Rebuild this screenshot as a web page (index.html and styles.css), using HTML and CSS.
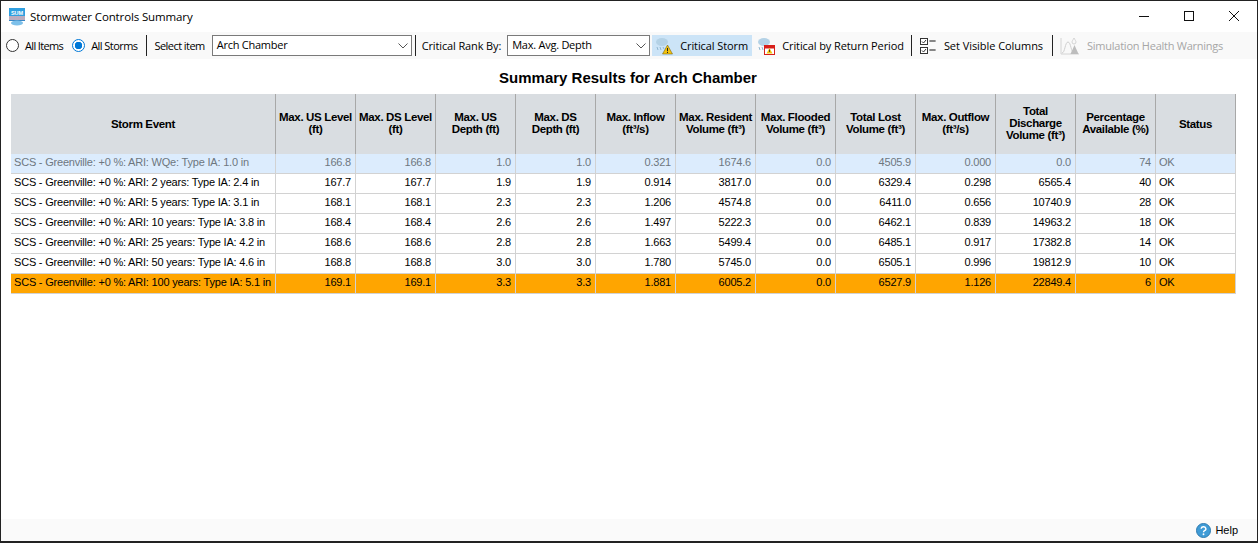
FILE: index.html
```html
<!DOCTYPE html>
<html lang="en">
<head>
<meta charset="utf-8">
<title>Stormwater Controls Summary</title>
<link rel="stylesheet" href="styles.css">
</head>
<body>
<div class="window">
  <header class="titlebar">
    <svg class="app-icon" width="16" height="18" viewBox="0 0 16 18">
      <rect x="0" y="0" width="16" height="8" fill="#2f9fe0"/>
      <text x="8" y="6.500" class="sum">SUM</text>
      <rect x="0" y="8" width="16" height="4" fill="#bcd9ee"/>
      <path d="M1 8v4M3 8v4M5 8v4M7 8v4M9 8v4M11 8v4M13 8v4M15 8v4" stroke="#b76a7a" stroke-width=".8"/>
      <path d="M0 12h16v1H0z" fill="#3a87c4"/>
      <ellipse cx="8" cy="15" rx="6" ry="2.500" fill="#7dc0ea"/>
    </svg>
    <span class="title">Stormwater Controls Summary</span>
    <div class="controls">
      <svg width="10" height="10" viewBox="0 0 10 10"><path d="M0 5.500h10" stroke="#111" stroke-width="1"/></svg>
      <svg width="10" height="10" viewBox="0 0 10 10"><rect x=".5" y=".5" width="9" height="9" fill="none" stroke="#111"/></svg>
      <svg width="10" height="10" viewBox="0 0 10 10"><path d="M0 0l10 10M10 0L0 10" stroke="#111" stroke-width="1"/></svg>
    </div>
  </header>

  <div class="toolbar">
    <label class="radio"><span class="dot"></span>All Items</label>
    <label class="radio second"><span class="dot on"></span>All Storms</label>
    <span class="sep s1"></span>
    <span class="lbl select-lbl">Select item</span>
    <div class="combo wide"><span>Arch Chamber</span><svg width="10" height="6" viewBox="0 0 10 6"><path d="M.5.5L5 5 9.500.5" fill="none" stroke="#555"/></svg></div>
    <span class="sep s2"></span>
    <span class="lbl rank-lbl">Critical Rank By:</span>
    <div class="combo narrow"><span>Max. Avg. Depth</span><svg width="10" height="6" viewBox="0 0 10 6"><path d="M.5.5L5 5 9.500.5" fill="none" stroke="#555"/></svg></div>
    <button class="tool active" type="button">
      <svg width="18" height="18" viewBox="0 0 18 18">
        <ellipse cx="7" cy="5" rx="6" ry="4" fill="#b4d2e6"/>
        <path d="M2 10l1 3M5 10l1 3M8 10l1 2" stroke="#8fb6d0"/>
        <path d="M12.500 8l5 9h-10z" fill="#f4c20d" stroke="#6b5500" stroke-width=".5"/>
        <path d="M12.500 11v3.200M12.500 15v1" stroke="#222"/>
      </svg>
      Critical Storm
    </button>
    <button class="tool t2" type="button">
      <svg width="18" height="18" viewBox="0 0 18 18">
        <ellipse cx="7" cy="5" rx="6" ry="4" fill="#b4d2e6"/>
        <path d="M2 10l1 3M5 10l1 3" stroke="#8fb6d0"/>
        <rect x="7.500" y="8.500" width="10" height="9" fill="#fff" stroke="#d8201a"/>
        <rect x="7.500" y="8.500" width="10" height="3" fill="#d8201a"/>
        <path d="M12.500 11l3 5.500h-6z" fill="#f4c20d"/>
        <path d="M12.500 12.500v2.500" stroke="#222" stroke-width=".8"/>
      </svg>
      Critical by Return Period
    </button>
    <span class="sep s3"></span>
    <button class="tool t3" type="button">
      <svg width="18" height="18" viewBox="0 0 18 18">
        <rect x=".5" y="1.500" width="7" height="6" fill="#fff" stroke="#333"/>
        <rect x=".5" y="10.500" width="7" height="6" fill="#fff" stroke="#333"/>
        <path d="M2 4.500l1.500 1.500L6 3M2 13.500l1.500 1.500L6 12" fill="none" stroke="#333"/>
        <path d="M9.500 3l2 2 2-2 2 2M9.500 5l2-2 2 2 2-2M9.500 12l2 2 2-2 2 2M9.500 14l2-2 2 2 2-2" fill="none" stroke="#444" stroke-width=".8"/>
      </svg>
      Set Visible Columns
    </button>
    <span class="sep s4"></span>
    <button class="tool t4" type="button" disabled>
      <svg width="20" height="18" viewBox="0 0 20 18">
        <path d="M1 1v16h18" fill="none" stroke="#d4d4d4"/>
        <path d="M2 16c3 0 3-11 6-11s3 11 6 11" fill="none" stroke="#d0d0d0"/>
        <path d="M14.500 8l4 9h-8z" fill="#bdbdbd"/>
        <path d="M14 1c1 2 2 3 2 4a2 2 0 0 1-4 0c0-1 1-2 2-4z" fill="none" stroke="#d4d4d4"/>
      </svg>
      Simulation Health Warnings
    </button>
  </div>

  <h1 class="heading">Summary Results for Arch Chamber</h1>

  <table class="grid">
    <colgroup>
      <col class="c-event">
      <col class="c"><col class="c"><col class="c"><col class="c"><col class="c"><col class="c">
      <col class="c"><col class="c"><col class="c"><col class="c"><col class="c"><col class="c">
    </colgroup>
    <thead>
      <tr>
        <th class="single">Storm Event</th>
        <th>Max. US Level<br>(ft)</th>
        <th>Max. DS Level<br>(ft)</th>
        <th>Max. US<br>Depth (ft)</th>
        <th>Max. DS<br>Depth (ft)</th>
        <th>Max. Inflow<br>(ft³/s)</th>
        <th>Max. Resident<br>Volume (ft³)</th>
        <th>Max. Flooded<br>Volume (ft³)</th>
        <th>Total Lost<br>Volume (ft³)</th>
        <th>Max. Outflow<br>(ft³/s)</th>
        <th>Total<br>Discharge<br>Volume (ft³)</th>
        <th>Percentage<br>Available (%)</th>
        <th class="single">Status</th>
      </tr>
    </thead>
    <tbody>
      <tr class="selected"><td>SCS - Greenville: +0 %: ARI: WQe: Type IA: 1.0 in</td><td>166.8</td><td>166.8</td><td>1.0</td><td>1.0</td><td>0.321</td><td>1674.6</td><td>0.0</td><td>4505.9</td><td>0.000</td><td>0.0</td><td>74</td><td>OK</td></tr>
      <tr><td>SCS - Greenville: +0 %: ARI: 2 years: Type IA: 2.4 in</td><td>167.7</td><td>167.7</td><td>1.9</td><td>1.9</td><td>0.914</td><td>3817.0</td><td>0.0</td><td>6329.4</td><td>0.298</td><td>6565.4</td><td>40</td><td>OK</td></tr>
      <tr><td>SCS - Greenville: +0 %: ARI: 5 years: Type IA: 3.1 in</td><td>168.1</td><td>168.1</td><td>2.3</td><td>2.3</td><td>1.206</td><td>4574.8</td><td>0.0</td><td>6411.0</td><td>0.656</td><td>10740.9</td><td>28</td><td>OK</td></tr>
      <tr><td>SCS - Greenville: +0 %: ARI: 10 years: Type IA: 3.8 in</td><td>168.4</td><td>168.4</td><td>2.6</td><td>2.6</td><td>1.497</td><td>5222.3</td><td>0.0</td><td>6462.1</td><td>0.839</td><td>14963.2</td><td>18</td><td>OK</td></tr>
      <tr><td>SCS - Greenville: +0 %: ARI: 25 years: Type IA: 4.2 in</td><td>168.6</td><td>168.6</td><td>2.8</td><td>2.8</td><td>1.663</td><td>5499.4</td><td>0.0</td><td>6485.1</td><td>0.917</td><td>17382.8</td><td>14</td><td>OK</td></tr>
      <tr><td>SCS - Greenville: +0 %: ARI: 50 years: Type IA: 4.6 in</td><td>168.8</td><td>168.8</td><td>3.0</td><td>3.0</td><td>1.780</td><td>5745.0</td><td>0.0</td><td>6505.1</td><td>0.996</td><td>19812.9</td><td>10</td><td>OK</td></tr>
      <tr class="critical"><td>SCS - Greenville: +0 %: ARI: 100 years: Type IA: 5.1 in</td><td>169.1</td><td>169.1</td><td>3.3</td><td>3.3</td><td>1.881</td><td>6005.2</td><td>0.0</td><td>6527.9</td><td>1.126</td><td>22849.4</td><td>6</td><td>OK</td></tr>
    </tbody>
  </table>

  <footer class="statusbar">
    <svg width="15" height="15" viewBox="0 0 16 16">
      <circle cx="8" cy="8" r="7.500" fill="#3f9bd6" stroke="#2a78ad"/>
      <path d="M5.500 6.200a2.500 2.200 0 1 1 3.600 2c-.8.400-1.100.8-1.100 1.600" fill="none" stroke="#fff" stroke-width="1.500"/>
      <circle cx="8" cy="12" r="1" fill="#fff"/>
    </svg>
    <span>Help</span>
  </footer>
</div>
</body>
</html>
```

FILE: styles.css
```css
* { box-sizing: border-box; }
html, body { margin: 0; padding: 0; background: #fff; }
body { width: 1258px; height: 543px; overflow: hidden; font-family: "Liberation Sans", Arial, sans-serif; color: #000; }

.window { width: 1258px; height: 543px; border: 1px solid #222; border-bottom-width: 2px; display: flex; flex-direction: column; background: #fff; }

.titlebar { height: 31px; flex: none; display: flex; align-items: center; padding-left: 8px; }
.app-icon { margin-right: 5px; }
.sum { font-family: "Liberation Sans", sans-serif; font-size: 5.500px; font-weight: 700; fill: #fff; text-anchor: middle; }
.title { font-family: "Open Sans", sans-serif; font-size: 11.500px; letter-spacing: -.13px; }
.controls { margin-left: auto; display: flex; gap: 35px; padding: 0 18px 2px 0; }

.toolbar { height: 27px; flex: none; background: #f9f9f9; display: flex; align-items: center; font-family: "Open Sans", sans-serif; font-size: 11px; letter-spacing: -.25px; padding-left: 5px; }
.radio { display: flex; align-items: center; gap: 6px; letter-spacing: -.65px; }
.second { margin-left: 9px; letter-spacing: -.55px; }
.dot { width: 13px; height: 13px; border: 1px solid #333; border-radius: 50%; background: #fff; flex: none; }
.dot.on { border-color: #0078d7; background: radial-gradient(circle, #0078d7 0 3.500px, #fff 4px); }
.sep { width: 1px; height: 21px; background: #222; flex: none; }
.s1 { margin-left: 9px; }
.select-lbl { margin-left: 7px; letter-spacing: -.55px; }
.combo { height: 21px; flex: none; border: 1px solid #7a7a7a; background: #fff; display: flex; align-items: center; justify-content: space-between; padding: 0 3px 2px 4px; }
.combo svg { margin-top: 2px; }
.wide { width: 200px; margin-left: 7px; }
.narrow { width: 143px; margin-left: 6px; }
.s2 { margin-left: 3px; }
.rank-lbl { margin-left: 6px; letter-spacing: -.13px; }
.tool { height: 21px; border: 0; padding: 0; margin: 0; background: transparent; display: flex; align-items: center; gap: 7px; font: inherit; letter-spacing: -.1px; color: #000; flex: none; }
.active { width: 100px; margin-left: 2px; background: #cce4f7; padding-left: 3px; }
.t2 { margin-left: 5px; }
.s3 { margin-left: 7px; }
.t3 { margin-left: 8px; gap: 6px; letter-spacing: -.05px; }
.s4 { margin-left: 9px; }
.t4 { margin-left: 7px; color: #a6a6a6; letter-spacing: -.25px; }

.heading { margin: 11px 0 0; padding-right: 2px; height: 24px; flex: none; text-align: center; font-size: 15px; line-height: 16px; font-weight: 700; }

.grid { margin-left: 10px; width: 1225px; border-collapse: separate; border-spacing: 0; table-layout: fixed; font-size: 11px; flex: none; }
.c-event { width: 265px; }
.c { width: 80px; }
.grid th { height: 60px; padding: 0 0 2px; background: #d9dde1; font-size: 11.500px; line-height: 12px; letter-spacing: -.35px; font-weight: 700; text-align: center; border-right: 1px solid #a8a8a8; }
.grid th.single { padding-bottom: 0; }
.grid td { height: 20px; padding: 0 4px 3px 3px; text-align: right; color: #000; border-right: 1px solid #d2d2d2; border-bottom: 1px solid #d2d2d2; white-space: nowrap; letter-spacing: -.2px; }
.grid td:first-child, .grid td:last-child { text-align: left; }
.selected td { background: #dcecfd; color: #6e7780; }
.critical td { background: #ffa500; }

.statusbar { margin-top: auto; height: 22px; flex: none; background: #fafafa; display: flex; align-items: center; justify-content: flex-end; gap: 4px; padding-right: 19px; font-size: 11px; }
```
